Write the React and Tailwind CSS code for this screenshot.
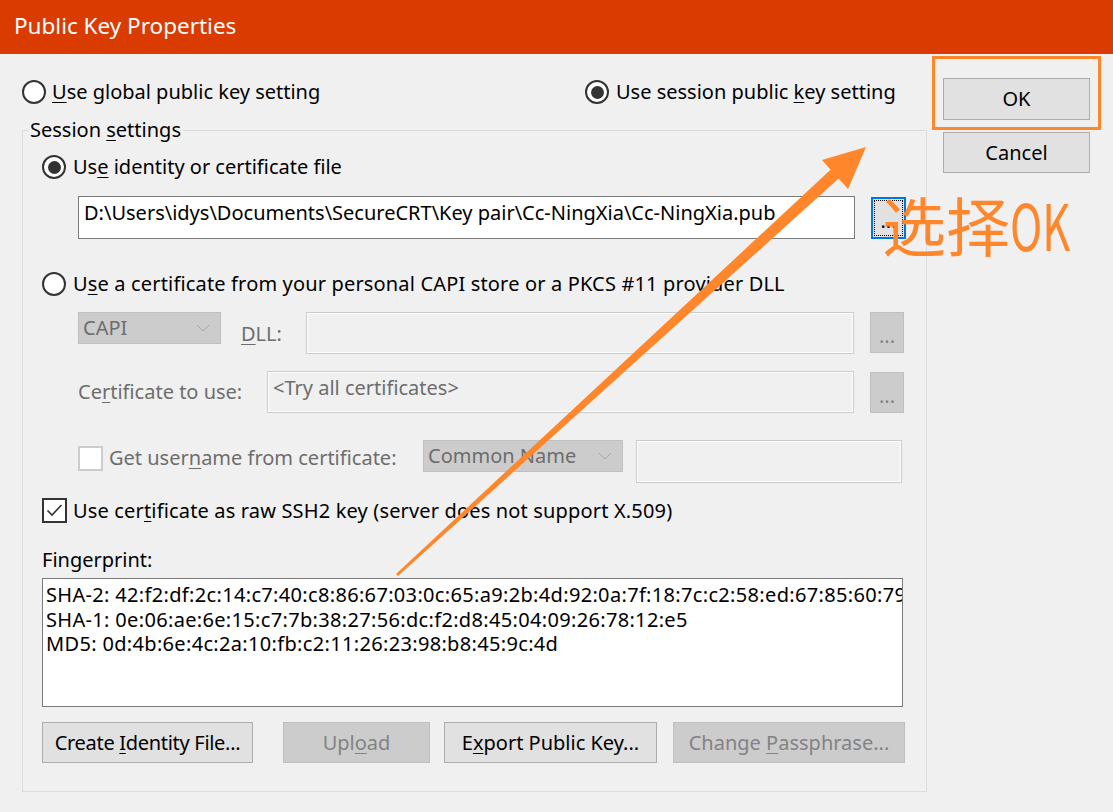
import React from "react";

function U({ children }) {
  return <span className="underline underline-offset-[3px] decoration-1">{children}</span>;
}

function Radio({ checked }) {
  return (
    <div className="w-[24px] h-[24px] rounded-full border-2 border-[#333333] bg-white flex items-center justify-center shrink-0">
      {checked && <div className="w-[13px] h-[13px] rounded-full bg-[#333333]" />}
    </div>
  );
}

function Check({ checked, disabled }) {
  return (
    <div
      className={
        "w-[25px] h-[25px] border-2 bg-white flex items-center justify-center shrink-0 " +
        (disabled ? "border-[#cccccc]" : "border-[#333333]")
      }
    >
      {checked && (
        <svg width="19" height="19" viewBox="0 0 19 19">
          <polyline points="2.5,9.5 7,14 16.5,4" fill="none" stroke="#333333" strokeWidth="1.6" />
        </svg>
      )}
    </div>
  );
}

function Chevron() {
  return (
    <svg width="14" height="8" viewBox="0 0 14 8" className="shrink-0">
      <polyline points="1,1 7,7 13,1" fill="none" stroke="#a6a6a6" strokeWidth="1" />
    </svg>
  );
}

function Combo({ w, label }) {
  return (
    <div
      className={
        "h-[32px] bg-[#cccccc] border border-[#bfbfbf] flex items-center justify-between pl-[4px] pr-[10px] text-[#6d6d6d] " +
        w
      }
    >
      <span>{label}</span>
      <Chevron />
    </div>
  );
}

function DisabledBox({ w, h = "h-[42px]", children }) {
  return (
    <div
      className={
        "border border-[#cccccc] bg-[#f0f0f0] shadow-[inset_0_0_0_1px_#ffffff] text-[#6d6d6d] px-[5px] pt-[3px] " +
        w +
        " " +
        h
      }
    >
      {children}
    </div>
  );
}

function DotsButton({ focused }) {
  if (focused) {
    return (
      <div className="w-[35px] h-[42px] border-2 border-[#0078d7] bg-[#e1e1e1] p-[1px] ml-[16px] shrink-0">
        <div className="w-full h-full border border-dotted border-black flex items-end justify-center leading-[20px] pb-[4px]">
          ...
        </div>
      </div>
    );
  }
  return (
    <div className="w-[34px] h-[41px] bg-[#cccccc] border border-[#bfbfbf] ml-[16px] shrink-0 flex items-end justify-center pb-[6px] leading-[20px] text-[#838383]">
      ...
    </div>
  );
}

function Btn({ w, disabled, children, className = "" }) {
  return (
    <div
      className={
        "h-[41px] flex items-center justify-center border shrink-0 " +
        (disabled
          ? "bg-[#cccccc] border-[#bfbfbf] text-[#838383] "
          : "bg-[#e1e1e1] border-[#adadad] text-black ") +
        w +
        " " +
        className
      }
    >
      {children}
    </div>
  );
}

function Arrow() {
  return (
    <svg className="absolute inset-0 pointer-events-none" width="1113" height="812" viewBox="0 0 1113 812">
      <polygon points="396,573.9 398,576.1 842,175.5 834,166.5" fill="#ff862a" />
      <polygon points="866,147 822,160 848,189" fill="#ff862a" />
    </svg>
  );
}

export default function App() {
  return (
    <div className="relative w-[1113px] h-[812px] overflow-hidden bg-[#f0f0f0] font-['Segoe_UI','Noto_Sans',sans-serif] text-[20px] leading-[26px] text-black">
      {/* title bar */}
      <div className="h-[54px] bg-[#da3b01] text-white flex items-center pl-[14px] text-[22.5px] pb-[2px]">
        Public Key Properties
      </div>

      <div className="flex">
        {/* left side */}
        <div className="w-[927px] pl-[22px]">
          <div className="mt-[26px] h-[24px] flex items-center">
            <div className="w-[563px] flex items-center gap-[6px]">
              <Radio />
              <span>
                <U>U</U>se global public key setting
              </span>
            </div>
            <div className="flex items-center gap-[7px]">
              <Radio checked />
              <span>
                Use session public <U>k</U>ey setting
              </span>
            </div>
          </div>

          <fieldset className="mt-[13px] w-[905px] h-[675px] border border-[#dcdcdc] p-0 m-0">
            <legend className="ml-[5px] px-[2px] leading-[26px] mt-[1px]">
              Session <U>s</U>ettings
            </legend>
            <div className="pl-[19px]">
              <div className="mt-[12px] h-[24px] flex items-center gap-[7px]">
                <Radio checked />
                <span>
                  Us<U>e</U> identity or certificate file
                </span>
              </div>

              <div className="mt-[17px] ml-[36px] flex items-start">
                <div className="w-[777px] h-[43px] bg-white border border-[#7a7a7a] px-[5px] pt-[3px] whitespace-nowrap overflow-hidden">
                  D:\Users\idys\Documents\SecureCRT\Key pair\Cc-NingXia\Cc-NingXia.pub
                </div>
                <div className="mt-[1px]">
                  <DotsButton focused />
                </div>
              </div>

              <div className="mt-[33px] h-[24px] flex items-center gap-[7px]">
                <Radio />
                <span className="tracking-[0.16px]">
                  U<U>s</U>e a certificate from your personal CAPI store or a PKCS #11 provider DLL
                </span>
              </div>

              <div className="mt-[16px] ml-[36px] flex items-start">
                <Combo w="w-[143px]" label="CAPI" />
                <span className="ml-[20px] mt-[9px] w-[65px] text-[#6d6d6d]">
                  <U>D</U>LL:
                </span>
                <DisabledBox w="w-[548px]" />
                <DotsButton />
              </div>

              <div className="mt-[17px] ml-[36px] flex items-center">
                <span className="w-[189px] text-[#6d6d6d]">
                  Ce<U>r</U>tificate to use:
                </span>
                <DisabledBox w="w-[587px]">&lt;Try all certificates&gt;</DisabledBox>
                <DotsButton />
              </div>

              <div className="mt-[27px] ml-[36px] flex items-start">
                <div className="mt-[5px] flex items-center gap-[6px] w-[345px]">
                  <Check disabled />
                  <span className="text-[#6d6d6d]">
                    Get user<U>n</U>ame from certificate:
                  </span>
                </div>
                <Combo w="w-[200px]" label="Common Name" />
                <div className="ml-[13px]">
                  <DisabledBox w="w-[266px]" h="h-[43px]" />
                </div>
              </div>

              <div className="mt-[15px] h-[25px] flex items-center gap-[6px]">
                <Check checked />
                <span className="tracking-[0.16px]">
                  Use cer<U>t</U>ificate as raw SSH2 key (server does not support X.509)
                </span>
              </div>

              <div className="mt-[24px]">Fingerprint:</div>

              <div className="mt-[5px] w-[861px] h-[129px] bg-white border border-[#7a7a7a] px-[3px] pt-[4px] leading-[24.5px] tracking-[0.33px] whitespace-nowrap overflow-hidden">
                <div>
                  SHA-2: 42:f2:df:2c:14:c7:40:c8:86:67:03:0c:65:a9:2b:4d:92:0a:7f:18:7c:c2:58:ed:67:85:60:79:3a:1b
                </div>
                <div>SHA-1: 0e:06:ae:6e:15:c7:7b:38:27:56:dc:f2:d8:45:04:09:26:78:12:e5</div>
                <div>MD5: 0d:4b:6e:4c:2a:10:fb:c2:11:26:23:98:b8:45:9c:4d</div>
              </div>

              <div className="mt-[15px] flex">
                <Btn w="w-[211px]">
                  <span className="tracking-[-0.3px]">
                    Create <U>I</U>dentity File...
                  </span>
                </Btn>
                <Btn w="w-[147px]" disabled className="ml-[30px]">
                  <span>
                    Upl<U>o</U>ad
                  </span>
                </Btn>
                <Btn w="w-[213px]" className="ml-[14px]">
                  <span>
                    E<U>x</U>port Public Key...
                  </span>
                </Btn>
                <Btn w="w-[232px]" disabled className="ml-[16px]">
                  <span>
                    Change <U>P</U>assphrase...
                  </span>
                </Btn>
              </div>
            </div>
          </fieldset>
        </div>

        {/* right side */}
        <div className="pl-[16px] pt-[24px] flex flex-col">
          <Btn w="w-[147px]" className="h-[42px]">OK</Btn>
          <Btn w="w-[147px]" className="mt-[12px] h-[40px]">Cancel</Btn>
        </div>
      </div>

      {/* annotation overlay */}
      <div className="absolute left-[932px] top-[56px] w-[169px] h-[74px] border-[3px] border-[#ff862a] pointer-events-none" />
      <Arrow />
      <div className="absolute left-[882px] top-[191px] text-[64px] leading-[64px] text-[#ff862a] font-['Noto_Sans_CJK_SC',sans-serif] pointer-events-none whitespace-nowrap">
        选择<span className="inline-block origin-left scale-x-[0.68]">OK</span>
      </div>
    </div>
  );
}
